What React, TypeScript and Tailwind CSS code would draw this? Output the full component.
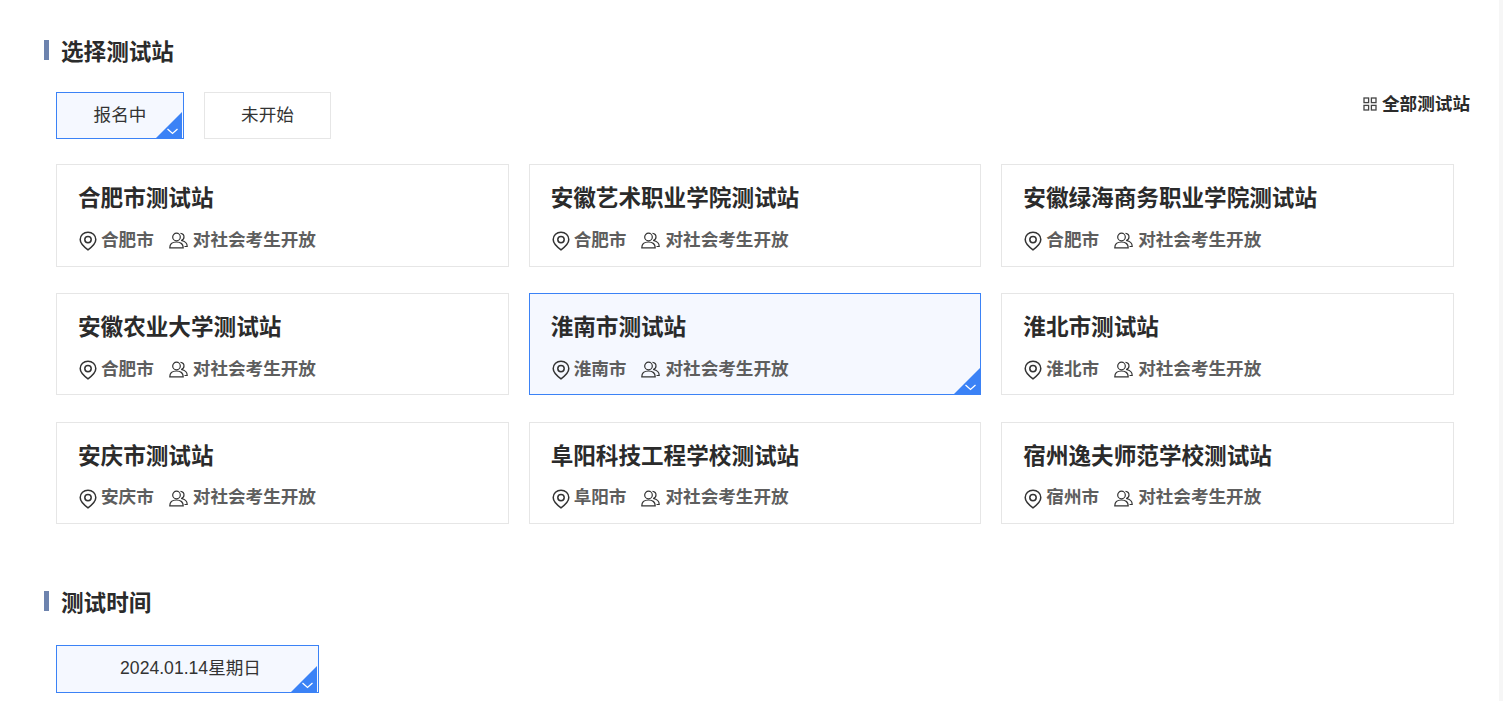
import React from 'react';

const stations = [
  { name: '合肥市测试站', city: '合肥市' },
  { name: '安徽艺术职业学院测试站', city: '合肥市' },
  { name: '安徽绿海商务职业学院测试站', city: '合肥市' },
  { name: '安徽农业大学测试站', city: '合肥市' },
  { name: '淮南市测试站', city: '淮南市', active: true },
  { name: '淮北市测试站', city: '淮北市' },
  { name: '安庆市测试站', city: '安庆市' },
  { name: '阜阳科技工程学校测试站', city: '阜阳市' },
  { name: '宿州逸夫师范学校测试站', city: '宿州市' },
];

const Corner = ({ inset = false }: { inset?: boolean }) => (
  <svg
    className={inset ? 'absolute right-[1px] bottom-0' : 'absolute right-0 bottom-0'}
    width="26"
    height="26"
    viewBox="0 0 26 26"
  >
    <path d="M26 0V26H0Z" fill="#3b82f6" />
    <path d="M11.5 17L16.5 21.5L21.5 17" fill="none" stroke="#fff" strokeWidth="1.3" />
  </svg>
);

const PinIcon = () => (
  <svg width="18" height="20" viewBox="0 0 18 20" fill="none" stroke="#333" strokeWidth="1.5" className="shrink-0 mt-[2px] ml-[1px]">
    <path d="M9 18.8C5 16 1.2 13 1.2 8.6C1.2 4.4 4.7 1.2 9 1.2C13.3 1.2 16.8 4.4 16.8 8.6C16.8 13 13 16 9 18.8Z" />
    <circle cx="9" cy="8.6" r="3.2" />
  </svg>
);

const UserIcon = () => (
  <svg width="19" height="17" viewBox="0 0 19 17" fill="none" stroke="#333" strokeWidth="1.2" className="shrink-0 mt-[2px]">
    <circle cx="7.5" cy="5" r="3.8" />
    <path d="M0.8 15.8C0.8 12 3.5 10 7.5 10C11.5 10 14.2 12 14.2 15.8Z" />
    <path d="M11.5 1.4C13.6 1.6 15 3 15 5C15 6.8 13.8 8 12.2 8.5C15.6 9 18.2 11 18.2 14.5H15.5" />
  </svg>
);

const GridIcon = () => (
  <svg width="14" height="14" viewBox="0 0 14 14" fill="none" stroke="#444" strokeWidth="1.3">
    <rect x="1" y="1" width="4.6" height="4.6" />
    <rect x="8.4" y="1" width="4.6" height="4.6" />
    <rect x="1" y="8.4" width="4.6" height="4.6" />
    <rect x="8.4" y="8.4" width="4.6" height="4.6" />
  </svg>
);

const SectionTitle = ({ children }: { children: React.ReactNode }) => (
  <div className="flex items-start h-[24px] pl-[44px]">
    <span className="w-[5px] h-[20px] bg-[#6d83ae] mr-[12px]"></span>
    <h2 className="text-[22.6px] leading-[24px] mt-[1px] font-bold text-[#2b2b2b]">{children}</h2>
  </div>
);

export default function App() {
  return (
    <div
      className="h-[701px] overflow-hidden bg-white border-r-4 border-[#f6f6f6] pt-[40px]"
      style={{ fontFamily: '"Liberation Sans", "Noto Sans CJK SC", sans-serif' }}
    >
      <SectionTitle>选择测试站</SectionTitle>

      <div className="flex justify-between items-start pl-[56px] pr-[29px] mt-[28px]">
        <div className="flex gap-[20px]">
          <button className="relative w-[128px] h-[47px] border border-[#3b82f6] bg-[#f5f8ff] text-[17.6px] text-[#333]">
            报名中
            <Corner inset />
          </button>
          <button className="w-[127px] h-[47px] border border-[#e6e6e6] bg-white text-[17.6px] text-[#333]">
            未开始
          </button>
        </div>
        <div className="flex items-center gap-[5px] h-[24px]">
          <GridIcon />
          <span className="text-[17.6px] leading-[24px] font-bold text-[#2b2b2b]">全部测试站</span>
        </div>
      </div>

      <div className="grid grid-cols-3 gap-x-[20px] gap-y-[26.23px] ml-[56px] w-[1398px] mt-[24.9px]">
        {stations.map((s) => (
          <div
            key={s.name}
            className={
              s.active
                ? 'relative h-[102.67px] border border-[#3b82f6] bg-[#f5f8ff] pl-[21px] pt-[19px]'
                : 'relative h-[102.67px] border border-[#e6e6e6] bg-white pl-[21px] pt-[19px]'
            }
          >
            <h3 className="text-[22.6px] leading-[30px] font-bold text-[#2b2b2b]">{s.name}</h3>
            <div className="flex items-center mt-[14px] h-[24px] text-[17.6px] font-bold text-[#5e5e5e]">
              <PinIcon />
              <span className="ml-[4px]">{s.city}</span>
              <span className="ml-[15px]"><UserIcon /></span>
              <span className="ml-[5px]">对社会考生开放</span>
            </div>
            {s.active && <Corner />}
          </div>
        ))}
      </div>

      <div className="mt-[66.63px]">
        <SectionTitle>测试时间</SectionTitle>
      </div>

      <div className="pl-[56px] mt-[30px]">
        <button className="relative w-[263px] h-[48px] border border-[#3b82f6] bg-[#f5f8ff] pl-[6px] pb-[1px] text-[17.6px] text-[#333]">
          2024.01.14星期日
          <Corner inset />
        </button>
      </div>
    </div>
  );
}
